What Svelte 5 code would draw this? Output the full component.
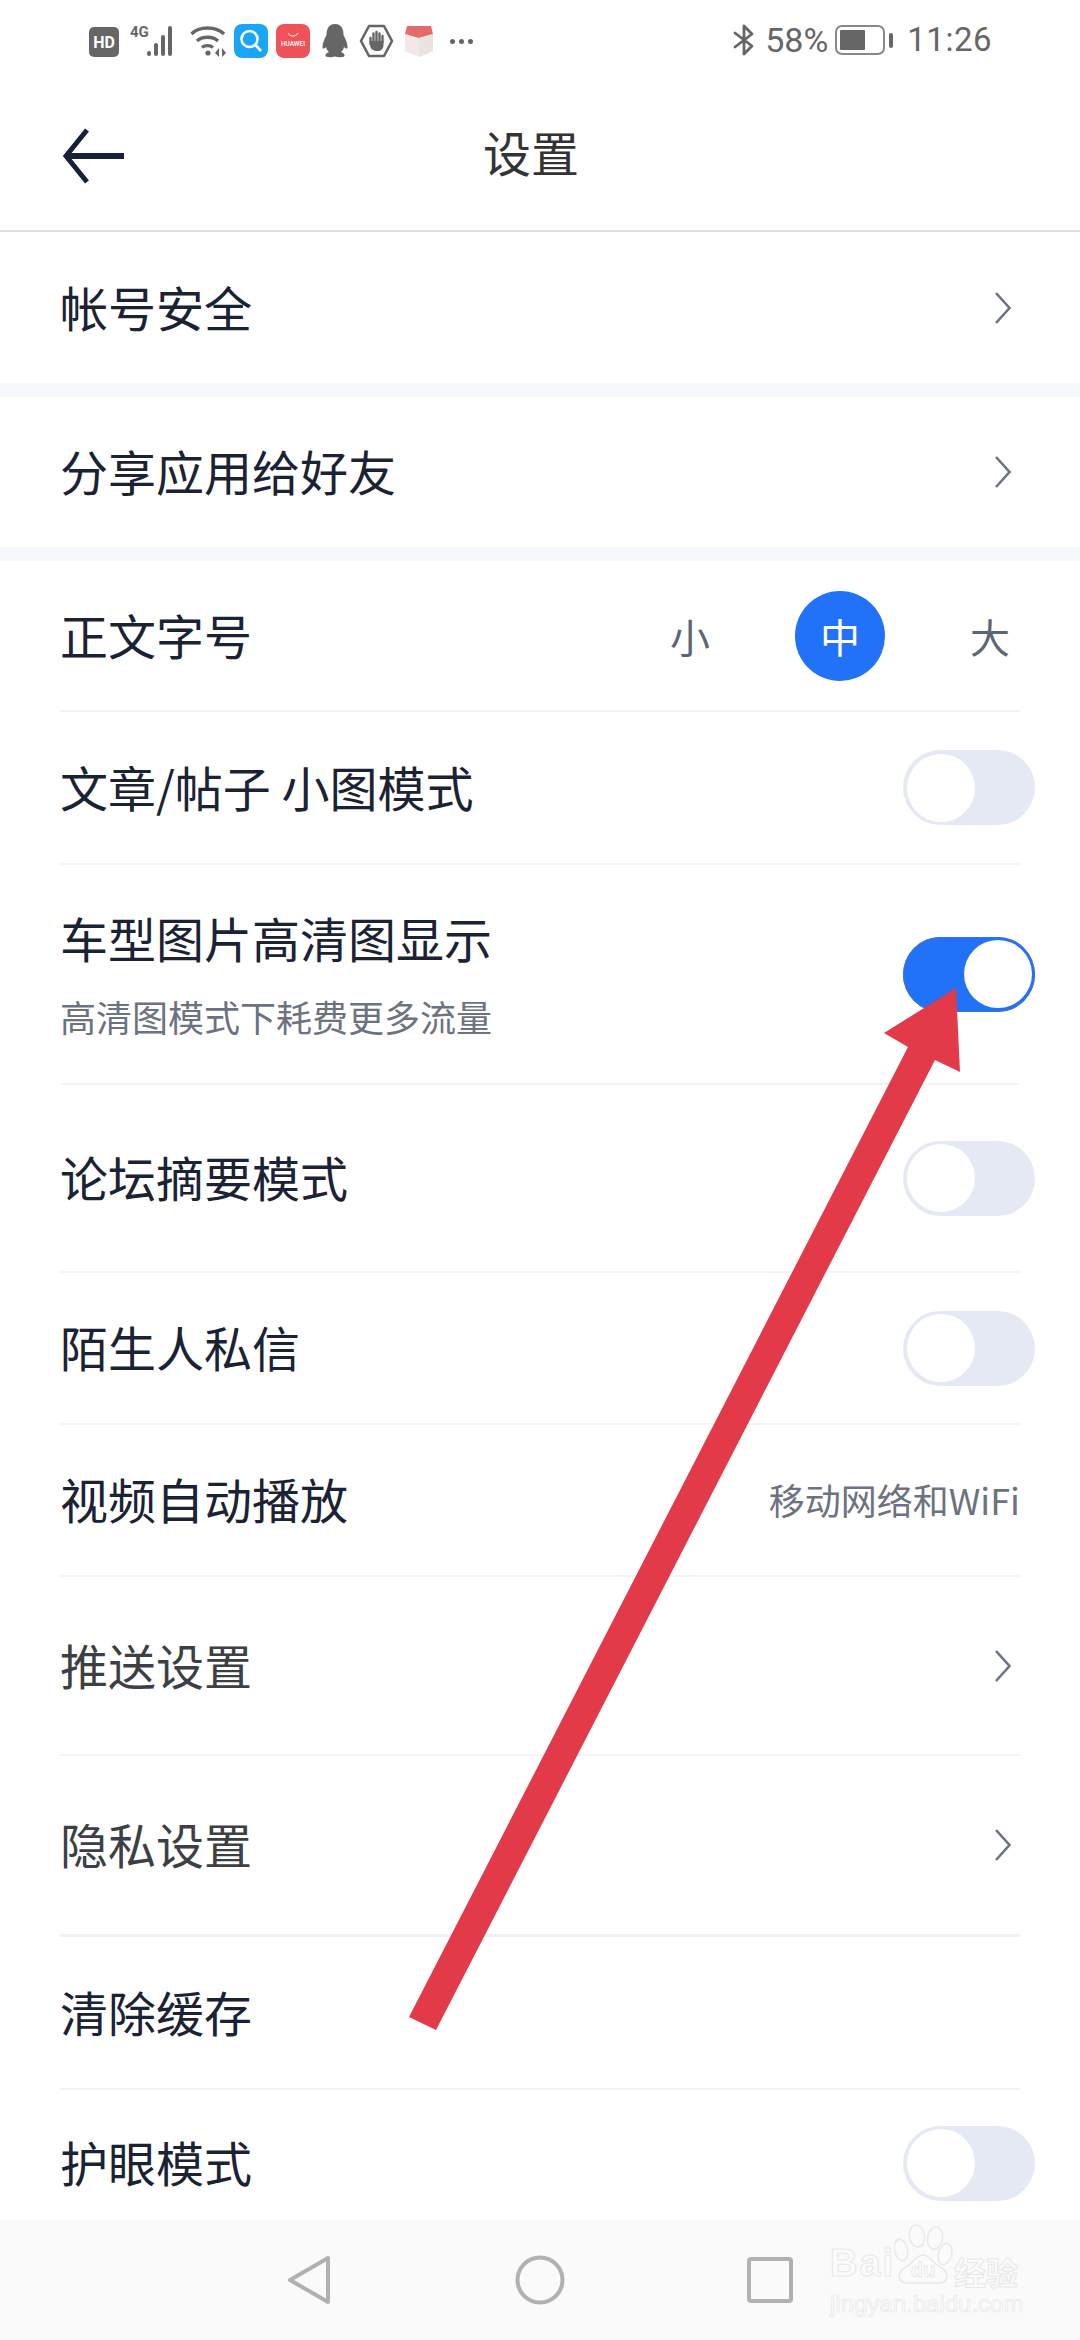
<script lang="ts">
  type Row = {
    label: string;
    h: number;
    sub?: string;
    kind?: 'chevron' | 'toggle' | 'toggle-on' | 'size' | 'value';
    value?: string;
    plain?: boolean;
    grey?: boolean;
    thick?: boolean;
  };

  const groups: Row[][] = [
    [{ label: '帐号安全', h: 151, kind: 'chevron', plain: true }],
    [{ label: '分享应用给好友', h: 150, kind: 'chevron', plain: true }],
    [
      { label: '正文字号', h: 151, kind: 'size' },
      { label: '文章/帖子 小图模式', h: 153, kind: 'toggle' },
      { label: '车型图片高清图显示', h: 220, kind: 'toggle-on', sub: '高清图模式下耗费更多流量' },
      { label: '论坛摘要模式', h: 188, kind: 'toggle' },
      { label: '陌生人私信', h: 152, kind: 'toggle' },
      { label: '视频自动播放', h: 152, kind: 'value', value: '移动网络和WiFi' },
      { label: '推送设置', h: 179, kind: 'chevron', grey: true },
      { label: '隐私设置', h: 181, kind: 'chevron', grey: true, thick: true },
      { label: '清除缓存', h: 153 },
      { label: '护眼模式', h: 146, kind: 'toggle', plain: true }
    ]
  ];
</script>

<div class="page">
  <div class="status">
    <div class="status-left">
      <svg class="ic" width="30" height="30" viewBox="0 0 30 30">
        <rect width="30" height="30" rx="5" fill="#666" />
        <text x="15" y="21" text-anchor="middle" class="hd">HD</text>
      </svg>
      <svg class="ic net" width="50" height="34" viewBox="0 0 50 34">
        <text x="0" y="13" class="fourg">4G</text>
        <rect x="17" y="27" width="4" height="5" rx="2" fill="#666" />
        <rect x="24" y="19" width="4" height="13" rx="2" fill="#666" />
        <rect x="31" y="11" width="4" height="21" rx="2" fill="#666" />
        <rect x="38" y="2" width="4" height="30" rx="2" fill="#666" />
      </svg>
      <svg class="ic wifi" width="38" height="34" viewBox="0 0 38 34" fill="none" stroke="#666" stroke-width="3.4">
        <path d="M1.5 10 C9 2 26 2 34 10" />
        <path d="M7 17 C12 12 23 12 28 17" />
        <path d="M12 23.500 C15 21 20 21 23 23.500" />
        <circle cx="18" cy="29" r="2.600" fill="#666" stroke="none" />
        <path d="M29 24 L25 29 L29 33 Z M32 24 L36 29 L32 33 Z" fill="#666" stroke="none" />
      </svg>
      <svg class="ic app1" width="34" height="34" viewBox="0 0 34 34">
        <rect width="34" height="34" rx="8" fill="#1ba5f5" />
        <circle cx="15.500" cy="15" r="8" fill="none" stroke="#fff" stroke-width="2.600" />
        <path d="M21.500 21 L27 27" stroke="#fff" stroke-width="2.600" />
      </svg>
      <svg class="ic app2" width="34" height="34" viewBox="0 0 34 34">
        <rect width="34" height="34" rx="8" fill="#f0525a" />
        <path d="M12 9 C14 13 20 13 22 9" fill="none" stroke="#fff" stroke-width="1" />
        <text x="17" y="22" text-anchor="middle" class="hw">HUAWEI</text>
      </svg>
      <svg class="ic qq" width="28" height="34" viewBox="0 0 28 34">
        <path d="M14 0 C7 0 5.500 6 5.500 11 C3.500 15 1.500 19 1.500 23 C1.500 25 3 25 5 23 C5.500 25 6.500 27 8 28 C5.500 29 4 30.500 4.500 32 C5 33.500 11 33.500 14 32.500 C17 33.500 23 33.500 23.500 32 C24 30.500 22.500 29 20 28 C21.500 27 22.500 25 23 23 C25 25 26.500 25 26.500 23 C26.500 19 24.500 15 22.500 11 C22.500 6 21 0 14 0 Z" fill="#666" />
      </svg>
      <svg class="ic hex" width="35" height="34" viewBox="0 0 35 34">
        <path d="M10 2 H25 L33 17 L25 32 H10 L2 17 Z" fill="none" stroke="#666" stroke-width="2.600" stroke-linejoin="round" />
        <path d="M11.500 14 V20 M14.500 17 V9.500 M17.500 17 V8 M20.500 17 V9.500 M23.500 18 V12" fill="none" stroke="#666" stroke-width="2.400" stroke-linecap="round" />
        <path d="M11 17 H24.500 V22 C24 25 22 27 18 27 C14 27 11 25 11 20 Z" fill="#666" />
      </svg>
      <svg class="ic box" width="34" height="34" viewBox="0 0 34 34">
        <path d="M3 10 L17 14 L31 10 V27 L17 33 L3 27 Z" fill="#f1e8e8" />
        <path d="M5 2 H29 L31 10 L17 14 L3 10 Z" fill="#e46a6c" />
        <path d="M17 14 L31 10 V27 L17 33 Z" fill="#ece2e2" />
      </svg>
      <div class="dots"><i></i><i></i><i></i></div>
    </div>
    <div class="status-right">
      <svg width="22" height="32" viewBox="0 0 22 32" fill="none" stroke="#666" stroke-width="2.800" stroke-linecap="round" stroke-linejoin="round">
        <path d="M2 9 L19 22 L11 30 V2 L19 10 L2 23" />
      </svg>
      <span class="pct">58%</span>
      <div class="battery"><div class="level"></div></div>
      <div class="nub"></div>
      <span class="time">11:26</span>
    </div>
  </div>

  <header class="header">
    <svg class="back" width="61" height="56" viewBox="0 0 61 56" fill="none" stroke="#16203a">
      <path d="M4 28 H61" stroke-width="6" />
      <path d="M24 2 L3 28 L24 54" stroke-width="5" />
    </svg>
    <div class="title">设置</div>
  </header>

  {#each groups as group, i}
    {#if i > 0}<div class="gap"></div>{/if}
    {#each group as row}
      <div class="row">
        <div class="row-inner" class:plain={row.plain} class:thick={row.thick} style="height:{row.h}px">
          <div class="labels">
            <div class="label" class:grey={row.grey}>{row.label}</div>
            {#if row.sub}<div class="sub">{row.sub}</div>{/if}
          </div>
          {#if row.kind === 'chevron'}
            <svg class="chev" width="18" height="32" viewBox="0 0 18 32" fill="none" stroke="#6b7280" stroke-width="2.600">
              <path d="M2 1 L15.500 16 L2 31" />
            </svg>
          {:else if row.kind === 'toggle'}
            <div class="toggle"><div class="knob"></div></div>
          {:else if row.kind === 'toggle-on'}
            <div class="toggle on"><div class="knob"></div></div>
          {:else if row.kind === 'size'}
            <div class="sizes">
              <span>小</span>
              <span class="active">中</span>
              <span>大</span>
            </div>
          {:else if row.kind === 'value'}
            <div class="value">{row.value}</div>
          {/if}
        </div>
      </div>
    {/each}
  {/each}

  <nav class="nav">
    <svg width="44" height="50" viewBox="0 0 44 50" fill="none" stroke="#b1b1b1" stroke-width="4" stroke-linejoin="round">
      <path d="M41 3 V47 L3 25 Z" />
    </svg>
    <svg width="50" height="50" viewBox="0 0 50 50" fill="none" stroke="#b1b1b1" stroke-width="4">
      <circle cx="25" cy="25" r="22.500" />
    </svg>
    <svg width="46" height="46" viewBox="0 0 46 46" fill="none" stroke="#b1b1b1" stroke-width="4" stroke-linejoin="round">
      <rect x="2" y="2" width="42" height="42" rx="2" />
    </svg>
  </nav>

  <div class="mark">
    <div class="mark-top">
      <span class="mark-en">Bai</span>
      <svg class="paw" width="60" height="62" viewBox="0 0 60 62" fill="none" stroke="#e8e8e8" stroke-width="1.500">
        <ellipse cx="7" cy="27" rx="6.500" ry="11" transform="rotate(-12 7 27)" />
        <ellipse cx="23" cy="13" rx="7.500" ry="11" transform="rotate(-8 23 13)" />
        <ellipse cx="41" cy="15" rx="7.500" ry="11" transform="rotate(8 41 15)" />
        <ellipse cx="51" cy="31" rx="6.500" ry="11" transform="rotate(16 51 31)" />
        <path d="M29 32 C22 32 20 40 12 44 C3 48 2 60 14 60 H44 C56 60 55 48 46 44 C38 40 36 32 29 32 Z" fill="#fbfbfb" />
        <text x="29" y="54" text-anchor="middle" class="paw-du">du</text>
      </svg>
      <span class="mark-cn">经验</span>
    </div>
    <div class="mark-url">jingyan.baidu.com</div>
  </div>

  <svg class="pointer" width="1080" height="2340" viewBox="0 0 1080 2340">
    <path d="M409 2017 L436 2030 L935 1060 L960 1072 L956 988 L884 1033 L908 1047 Z" fill="#e33a49" />
  </svg>
</div>

<style>
  :global(body) { margin: 0; background: #fff; }

  .page {
    position: relative; width: 1080px; height: 2340px; overflow: hidden; background: #fff;
    display: flex; flex-direction: column;
    font-family: "Noto Sans CJK SC", "Noto Sans", sans-serif; color: #1a2233;
  }

  .status {
    height: 72px; flex-shrink: 0; display: flex; align-items: flex-start; justify-content: space-between;
    padding: 24px 88px 0 89px; box-sizing: border-box; font-family: Roboto, sans-serif; color: #666;
  }
  .status-left { display: flex; align-items: flex-start; }
  .ic { display: block; flex-shrink: 0; }
  .ic:first-child { margin-top: 3px; }
  .net { margin-left: 11px; }
  .wifi { margin-left: 10px; }
  .app1 { margin-left: 6px; }
  .app2 { margin-left: 8px; }
  .qq { margin-left: 11px; }
  .hex { margin-left: 10px; }
  .box { margin-left: 8px; }
  .hd { font: 700 16px Roboto, sans-serif; fill: #fff; }
  .fourg { font: 700 15px "Roboto", sans-serif; fill: #666; }
  .hw { font: 500 6.500px Roboto, sans-serif; fill: #fff; }
  .dots { display: flex; gap: 4px; margin: 15px 0 0 14px; }
  .dots i { width: 5px; height: 5px; border-radius: 50%; background: #666; }

  .status-right { display: flex; align-items: center; height: 32px; }
  .pct { font-size: 34px; margin-left: 10px; line-height: 32px; }
  .battery {
    width: 50px; height: 30px; box-sizing: border-box; margin-left: 7px;
    border: 2.500px solid #888; border-radius: 7px; padding: 3px;
  }
  .level { width: 25px; height: 100%; background: #666; border-radius: 1px; }
  .nub { width: 4px; height: 15px; background: #666; margin-left: 4px; border-radius: 2px; }
  .time { font-size: 33px; margin-left: 14px; line-height: 32px; letter-spacing: 0.5px; }

  .header {
    height: 160px; flex-shrink: 0; box-sizing: border-box; position: relative;
    display: flex; align-items: center; justify-content: center;
    border-bottom: 2px solid #dedede;
  }
  .back { position: absolute; left: 63px; top: 56px; }
  .title { font-size: 48px; color: #333; line-height: 1; margin-right: 18px; }

  .gap { height: 14px; flex-shrink: 0; background: #f7f8fb; }

  .row { padding: 0 60px; flex-shrink: 0; }
  .row-inner {
    display: flex; align-items: center; justify-content: space-between;
    box-sizing: border-box; border-bottom: 2px solid #f3f4f7;
  }
  .row-inner.plain { border-bottom: none; }
  .row-inner.thick { border-bottom: 3px solid #f0f1f6; }
  .labels { padding-bottom: 4px; }
  .label { font-size: 48px; line-height: 60px; white-space: pre; }
  .label.grey { color: #3c3f44; }
  .sub { font-size: 36px; line-height: 44px; color: #6c7280; margin-top: 27px; }

  .chev { margin-right: 8px; }
  .value { font-size: 36px; color: #6c7280; padding-bottom: 2px; }

  .sizes { display: flex; gap: 60px; margin-right: -15px; font-size: 40px; color: #5f6673; }
  .sizes span {
    width: 90px; height: 90px; border-radius: 50%;
    display: flex; align-items: center; justify-content: center;
  }
  .sizes .active { background: #2271f9; color: #fff; }

  .toggle {
    width: 132px; height: 75px; box-sizing: border-box; margin-right: -15px;
    border-radius: 38px; background: #e4e9f3; padding: 3.500px;
    display: flex; justify-content: flex-start; flex-shrink: 0;
  }
  .knob { width: 68px; height: 68px; border-radius: 50%; background: #fff; }
  .toggle.on { background: #2271f9; justify-content: flex-end; box-shadow: inset 0 0 0 1.5px #3572e0; }

  .nav {
    position: absolute; left: 0; right: 0; bottom: 0; height: 120px; background: #fafafa;
    box-sizing: border-box; padding: 0 0 0 287px;
    display: flex; align-items: center;
  }
  .nav svg:nth-child(2) { margin-left: 184px; }
  .nav svg:nth-child(3) { margin-left: 182px; }

  .mark { position: absolute; left: 830px; top: 2223px; width: 195px; color: #fbfbfb; }
  .mark-top { display: flex; align-items: flex-end; height: 62px; }
  .mark-en {
    font: 700 38px/30px "Liberation Sans", sans-serif; letter-spacing: 2px;
    -webkit-text-stroke: 1px #e8e8e8;
    width: 64px; flex-shrink: 0; margin-bottom: 7px;
  }
  .paw { flex-shrink: 0; }
  .paw-du { font: 700 20px "Liberation Sans", sans-serif; fill: #fbfbfb; stroke: #e8e8e8; stroke-width: 0.8px; }
  .mark-cn {
    font-size: 32px; line-height: 32px; font-weight: 700; -webkit-text-stroke: 1px #e8e8e8; white-space: nowrap;
    margin-bottom: -2px;
  }
  .mark-url {
    font: 400 24px/28px "Liberation Sans", sans-serif; color: #fbfbfb; -webkit-text-stroke: 0.7px #e8e8e8;
    margin-top: 5px; white-space: nowrap;
  }

  .pointer { position: absolute; left: 0; top: 0; pointer-events: none; }
</style>
